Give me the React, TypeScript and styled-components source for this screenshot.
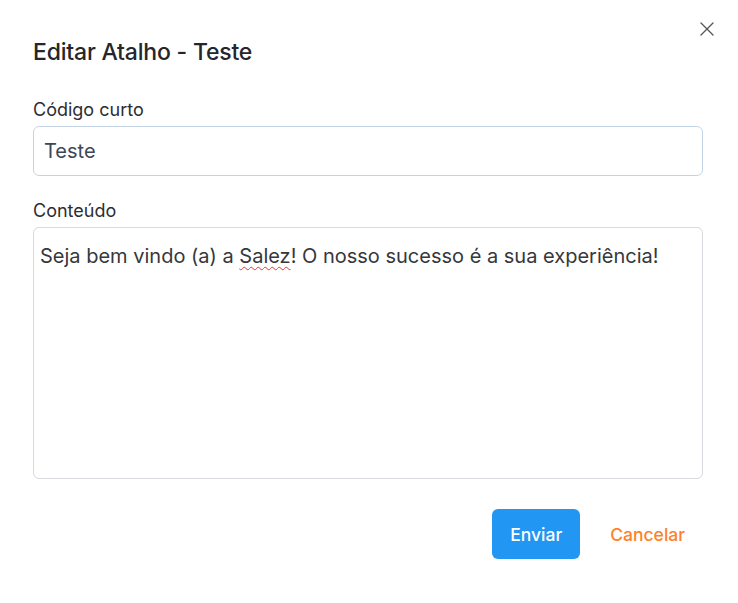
import React from "react";
import styled, {createGlobalStyle} from "styled-components";

const GlobalStyle = createGlobalStyle`
  html, body {
    margin: 0;
    padding: 0;
    background: #ffffff;
    font-family: Inter, "Open Sans", "Liberation Sans", sans-serif;
  }
`

const Modal = styled.div`
  position: relative;
  width: 738px;
  height: 603px;
  box-sizing: border-box;
  padding: 37px 35px 0 33px;
  background: #ffffff;
`

const CloseButton = styled.button`
  position: absolute;
  top: 20px;
  right: 22px;
  width: 18px;
  height: 18px;
  padding: 0;
  border: none;
  background: transparent;
  display: flex;
  align-items: center;
  justify-content: center;
  cursor: pointer;
`

const Title = styled.h2`
  margin: 0 0 32px 0;
  font-size: 23px;
  line-height: 30px;
  font-weight: 500;
  color: #25262b;
  letter-spacing: -0.2px;
`

const Field = styled.div`
  display: flex;
  flex-direction: column;
  gap: 5px;
  margin-bottom: 24px;
`

const Label = styled.label`
  font-size: 18px;
  line-height: 22px;
  color: #2c2d33;
`

const Input = styled.div`
  height: 50px;
  box-sizing: border-box;
  border: 1px solid #c3d4e6;
  border-radius: 6px;
  padding: 0 10px;
  display: flex;
  align-items: center;
  font-size: 20px;
  color: #3d4656;
`

const TextArea = styled.div`
  height: 252px;
  box-sizing: border-box;
  border: 1px solid #d9d9df;
  border-radius: 6px;
  padding: 15px 6px;
  font-size: 20px;
  line-height: 27px;
  color: #36373b;
`

const Misspelled = styled.span`
  text-decoration: underline wavy #e53935;
  text-decoration-thickness: 1px;
  text-underline-offset: 3px;
`

const Actions = styled.div`
  display: flex;
  justify-content: flex-end;
  align-items: center;
  gap: 12px;
  margin-top: 30px;
`

const Button = styled.button<{ $variant?: "primary" | "link" }>`
  height: 50px;
  padding: 0 18px;
  border: none;
  border-radius: 6px;
  font-family: inherit;
  font-size: 17.5px;
  font-weight: 500;
  cursor: pointer;
  background: ${p => p.$variant === "primary" ? "#2196f3" : "transparent"};
  color: ${p => p.$variant === "primary" ? "#ffffff" : "#ff7f2a"};
`

export default function App() {
    return (
        <>
            <GlobalStyle/>
            <Modal>
                <CloseButton aria-label="Fechar">
                    <svg width="14" height="14" viewBox="0 0 14 14" fill="none">
                        <path d="M1 1L13 13M13 1L1 13" stroke="#555" strokeWidth="1.3" strokeLinecap="round"/>
                    </svg>
                </CloseButton>
                <Title>Editar Atalho - Teste</Title>
                <Field>
                    <Label>Código curto</Label>
                    <Input>Teste</Input>
                </Field>
                <Field>
                    <Label>Conteúdo</Label>
                    <TextArea>
                        Seja bem vindo (a) a <Misspelled>Salez</Misspelled>! O nosso sucesso é a sua experiência!
                    </TextArea>
                </Field>
                <Actions>
                    <Button $variant="primary">Enviar</Button>
                    <Button $variant="link">Cancelar</Button>
                </Actions>
            </Modal>
        </>
    )
}
